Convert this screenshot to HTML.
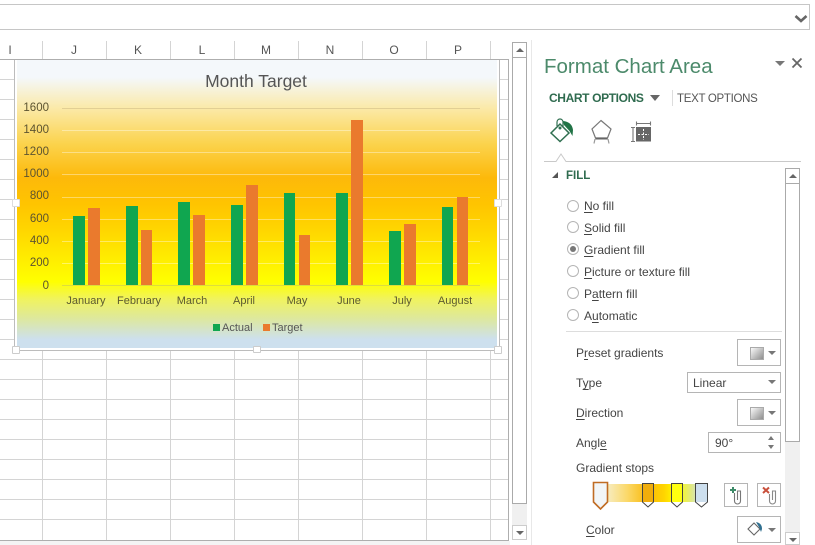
<!DOCTYPE html>
<html><head><meta charset="utf-8">
<style>
html,body{margin:0;padding:0;background:#fff}
#p{position:relative;width:815px;height:545px;overflow:hidden;background:#fff;font-family:"Liberation Sans",sans-serif;color:#444}
#p div,#p span.a{position:absolute}
.t{white-space:nowrap;line-height:16px;font-size:12px}
.h{top:43px;width:20px;text-align:center;font-size:12px;line-height:14px;color:#555}
.yl{left:18px;width:31px;text-align:right;font-size:11.5px;line-height:14px;color:#5c5330}
.xl{top:294px;width:60px;text-align:center;font-size:11px;line-height:14px;color:#5c5a30}
.g{left:62px;width:418px;height:1px;background:rgba(255,255,255,.38)}
.bg{background:#10a650}.bo{background:#ea7a2d}
.r{left:567px;width:10px;height:10px;border:1px solid #b5b5b5;border-radius:50%;background:#fff}
.btn{border:1px solid #b5b5b5;background:#fff;box-sizing:border-box}
.sw{left:12px;top:7px;width:14px;height:13px;background:linear-gradient(135deg,#fafafa,#8e8e8e);border:1px solid #aaa;box-sizing:border-box}
.ar{width:0;height:0;border-left:4px solid transparent;border-right:4px solid transparent;border-top:4px solid #777}
.u{text-decoration:underline;text-underline-offset:2px}
</style></head><body><div id="p">

<!-- formula bar -->
<div style="left:0;top:4px;width:809px;border:1px solid #c6c6c6;border-left:0;box-sizing:content-box;height:24px"></div>
<svg style="position:absolute;left:794px;top:14px" width="14" height="10"><path d="M1.5 2 L7 7 L12.5 2" fill="none" stroke="#666" stroke-width="2.6"/></svg>

<!-- column headers -->
<div class="h" style="left:0">I</div><div class="h" style="left:64px">J</div><div class="h" style="left:128px">K</div><div class="h" style="left:192px">L</div><div class="h" style="left:256px">M</div><div class="h" style="left:320px">N</div><div class="h" style="left:384px">O</div><div class="h" style="left:448px">P</div>

<!-- grid -->
<svg style="position:absolute;left:0;top:0" width="512" height="545">
<g stroke="#d4d4d4" stroke-width="1">
<path d="M0 79.5H14M0 99.5H14M0 119.5H14M0 139.5H14M0 159.5H14M0 179.5H14M0 199.5H14M0 219.5H14M0 239.5H14M0 259.5H14M0 279.5H14M0 299.5H14M0 319.5H14M0 339.5H14"/>
<path d="M499 79.5H508M499 99.5H508M499 119.5H508M499 139.5H508M499 159.5H508M499 179.5H508M499 199.5H508M499 219.5H508M499 239.5H508M499 259.5H508M499 279.5H508M499 299.5H508M499 319.5H508M499 339.5H508"/>
<path d="M0 359.5H508M0 379.5H508M0 399.5H508M0 419.5H508M0 439.5H508M0 459.5H508M0 479.5H508M0 499.5H508M0 519.5H508"/>
<path d="M42.5 350V540M106.5 350V540M170.5 350V540M234.5 350V540M298.5 350V540M362.5 350V540M426.5 350V540M490.5 350V540"/>
<path d="M42.5 41V59M106.5 41V59M170.5 41V59M234.5 41V59M298.5 41V59M362.5 41V59M426.5 41V59M490.5 41V59"/>
</g>
<path d="M0 59.5H508.5V540.5H0" fill="none" stroke="#aeaeae"/>
<path d="M14.5 60V350.5H499.5V60" fill="none" stroke="#bcbcbc"/>
</svg>

<!-- chart -->
<div style="left:17px;top:60px;width:480px;height:288px;background:linear-gradient(180deg,#f4f8fb 0,#f4f8fb 6%,#fbe9a6 17%,#fbd34d 29%,#fdb90a 41%,#ffc400 50%,#ffd800 60%,#ffff00 77%,#f0f35e 83%,#dde8a0 90%,#cde0ee 97%,#cde0ee 100%)"></div>
<div class="t" style="left:156px;top:71px;width:200px;text-align:center;font-size:17.5px;line-height:20px;color:#555">Month Target</div>

<div class="yl" style="top:101px">1600</div><div class="yl" style="top:123px">1400</div><div class="yl" style="top:145px">1200</div><div class="yl" style="top:167px">1000</div><div class="yl" style="top:189px">800</div><div class="yl" style="top:212px">600</div><div class="yl" style="top:234px">400</div><div class="yl" style="top:256px">200</div><div class="yl" style="top:279px">0</div>

<div class="g" style="top:108px;background:rgba(150,130,90,.25)"></div><div class="g" style="top:130px"></div><div class="g" style="top:152px"></div><div class="g" style="top:174px"></div><div class="g" style="top:197px"></div><div class="g" style="top:219px"></div><div class="g" style="top:241px"></div><div class="g" style="top:263px"></div><div class="g" style="top:285px;background:rgba(190,190,100,.5)"></div>

<div class="bg" style="left:73px;top:216px;width:12px;height:69px"></div><div class="bo" style="left:88px;top:208px;width:12px;height:77px"></div>
<div class="bg" style="left:126px;top:206px;width:12px;height:79px"></div><div class="bo" style="left:141px;top:230px;width:11px;height:55px"></div>
<div class="bg" style="left:178px;top:202px;width:12px;height:83px"></div><div class="bo" style="left:193px;top:215px;width:12px;height:70px"></div>
<div class="bg" style="left:231px;top:205px;width:12px;height:80px"></div><div class="bo" style="left:246px;top:185px;width:12px;height:100px"></div>
<div class="bg" style="left:284px;top:193px;width:11px;height:92px"></div><div class="bo" style="left:299px;top:235px;width:11px;height:50px"></div>
<div class="bg" style="left:336px;top:193px;width:12px;height:92px"></div><div class="bo" style="left:351px;top:120px;width:12px;height:165px"></div>
<div class="bg" style="left:389px;top:231px;width:12px;height:54px"></div><div class="bo" style="left:404px;top:224px;width:12px;height:61px"></div>
<div class="bg" style="left:442px;top:207px;width:11px;height:78px"></div><div class="bo" style="left:457px;top:197px;width:11px;height:88px"></div>

<div class="xl" style="left:56px">January</div><div class="xl" style="left:109px">February</div><div class="xl" style="left:162px">March</div><div class="xl" style="left:214px">April</div><div class="xl" style="left:267px">May</div><div class="xl" style="left:319px">June</div><div class="xl" style="left:372px">July</div><div class="xl" style="left:425px">August</div>

<div style="left:213px;top:324px;width:7px;height:7px;background:#10a650"></div>
<div class="t" style="left:222px;top:321px;font-size:11px;line-height:14px;color:#555">Actual</div>
<div style="left:263px;top:324px;width:7px;height:7px;background:#ea7a2d"></div>
<div class="t" style="left:272px;top:321px;font-size:11px;line-height:14px;color:#555">Target</div>

<!-- handles -->
<div style="left:12px;top:346px;width:6px;height:6px;background:#fff;border:1px solid #ccc;border-radius:1px"></div>
<div style="left:253px;top:346px;width:6px;height:5px;background:#fff;border:1px solid #ccc;border-radius:1px"></div>
<div style="left:494px;top:346px;width:6px;height:6px;background:#fff;border:1px solid #ccc;border-radius:1px"></div>
<div style="left:12px;top:199px;width:6px;height:6px;background:#fff;border:1px solid #ddd;border-radius:1px"></div>
<div style="left:494px;top:199px;width:6px;height:6px;background:#fff;border:1px solid #ddd;border-radius:1px"></div>

<!-- sheet scrollbar -->
<div style="left:512px;top:42px;width:15px;height:498px;background:#f0f0f0"></div>
<div class="btn" style="left:512px;top:42px;width:15px;height:16px;border-color:#aaa"><div class="ar" style="left:3px;top:5px;border-top:0;border-bottom:4px solid #666"></div></div>
<div class="btn" style="left:512px;top:57px;width:15px;height:447px;border-color:#aaa"></div>
<div class="btn" style="left:512px;top:525px;width:15px;height:15px;border-color:#ccc"><div class="ar" style="left:3px;top:5px;border-top-color:#666"></div></div>
<div style="left:0;top:541px;width:510px;height:4px;background:#f4f4f4"></div>

<!-- panel -->
<div style="left:531px;top:40px;width:1px;height:505px;background:#e8e8e8"></div>
<div class="t" style="left:544px;top:54px;font-size:20.500px;line-height:26px;color:#4c8a6b">Format Chart Area</div>
<div class="ar" style="left:775px;top:61px;border-left-width:5px;border-right-width:5px;border-top:5px solid #777"></div>
<svg style="position:absolute;left:791px;top:57px" width="12" height="12"><path d="M1.5 1.5L10.5 10.5M10.5 1.5L1.5 10.5" stroke="#666" stroke-width="1.8" fill="none"/></svg>
<div class="t" style="left:549px;top:90px;font-size:12px;font-weight:bold;letter-spacing:-.37px;color:#2f6b4f">CHART OPTIONS</div>
<div class="ar" style="left:650px;top:95px;border-left-width:5px;border-right-width:5px;border-top:6px solid #666"></div>
<div style="left:672px;top:90px;width:1px;height:16px;background:#ddd"></div>
<div class="t" style="left:677px;top:91px;font-size:11.500px;letter-spacing:-.3px;color:#555">TEXT OPTIONS</div>

<!-- tab icons -->
<svg style="position:absolute;left:548px;top:118px" width="110" height="34" fill="none">
<path d="M3 15 L12 6 L21 15 L12 23.500 Z" stroke="#2f6f50" stroke-width="1.500"/>
<path d="M9 8 V4 A3 3 0 0 1 15 4 V9" stroke="#2f6f50" stroke-width="1.200"/>
<circle cx="12" cy="10" r="1.500" fill="#2f6f50"/>
<path d="M15 3 Q24 4 25 12 L24.500 18 L21.500 13 L16 7 Z" fill="#217346"/>
<path d="M53 2.500 L63 11 L59.500 20 L47.500 20 L44 11 Z" stroke="#777" stroke-width="1.200"/>
<path d="M47.500 20.500H59.500" stroke="#666" stroke-width="2"/>
<path d="M47 21L46 25.500M60 21L61 25.500" stroke="#999" stroke-width="1.200"/>
<path d="M83 9.500H87M83 23.500H87M85 9.500V23.500" stroke="#777" stroke-width="1.100"/>
<path d="M88 5.500H103M88.500 3.500V7.500M102.500 3.500V7.500" stroke="#777" stroke-width="1.100"/>
<rect x="88" y="9" width="15" height="14.500" fill="#666"/>
<path d="M95.500 11V22M90 16.500H101" stroke="#fff" stroke-width="1" stroke-dasharray="2 1.500"/>
</svg>
<svg style="position:absolute;left:540px;top:150px" width="265" height="14" fill="none"><path d="M4 11.500H16L21 4L26 11.500H261" stroke="#c9c9c9"/></svg>

<!-- FILL -->
<svg style="position:absolute;left:551px;top:171px" width="9" height="9"><path d="M7 1V7H1Z" fill="#555"/></svg>
<div class="t" style="left:566px;top:168px;font-size:11.500px;font-weight:bold;color:#2f6b4f">FILL</div>

<!-- panel scrollbar -->
<div style="left:785px;top:168px;width:15px;height:377px;background:#f0f0f0"></div>
<div class="btn" style="left:785px;top:168px;width:15px;height:16px;border-color:#aaa"><div class="ar" style="left:3px;top:5px;border-top:0;border-bottom:4px solid #666"></div></div>
<div class="btn" style="left:785px;top:183px;width:15px;height:259px;border-color:#aaa"></div>
<div class="btn" style="left:785px;top:532px;width:15px;height:13px;border-color:#ccc"><div class="ar" style="left:3px;top:5px;border-top-color:#666"></div></div>

<!-- radios -->
<div class="r" style="top:200px"></div><div class="r" style="top:221px"></div><div class="r" style="top:243px"><div style="left:2px;top:2px;width:6px;height:6px;border-radius:50%;background:#777"></div></div><div class="r" style="top:265px"></div><div class="r" style="top:287px"></div><div class="r" style="top:309px"></div>
<div class="t" style="left:584px;top:198px"><span class="u">N</span>o fill</div>
<div class="t" style="left:584px;top:220px"><span class="u">S</span>olid fill</div>
<div class="t" style="left:584px;top:242px"><span class="u">G</span>radient fill</div>
<div class="t" style="left:584px;top:264px"><span class="u">P</span>icture or texture fill</div>
<div class="t" style="left:584px;top:286px">P<span class="u">a</span>ttern fill</div>
<div class="t" style="left:584px;top:308px">A<span class="u">u</span>tomatic</div>
<div style="left:566px;top:331px;width:216px;height:1px;background:#ddd"></div>

<div class="t" style="left:576px;top:345px">P<span class="u">r</span>eset gradients</div>
<div class="btn" style="left:737px;top:339px;width:44px;height:27px"><div class="sw"></div><div class="ar" style="left:30px;top:11px"></div></div>
<div class="t" style="left:576px;top:375px">T<span class="u">y</span>pe</div>
<div class="btn" style="left:687px;top:372px;width:94px;height:21px"><div class="t" style="left:5px;top:2px">Linear</div><div class="ar" style="left:80px;top:7px"></div></div>
<div class="t" style="left:576px;top:405px"><span class="u">D</span>irection</div>
<div class="btn" style="left:737px;top:399px;width:44px;height:27px"><div class="sw"></div><div class="ar" style="left:30px;top:11px"></div></div>
<div class="t" style="left:576px;top:435px">Angl<span class="u">e</span></div>
<div class="btn" style="left:708px;top:432px;width:73px;height:21px"><div class="t" style="left:6px;top:2px">90°</div><div class="ar" style="left:59px;top:3px;border-left-width:3px;border-right-width:3px;border-top:0;border-bottom:4px solid #777"></div><div class="ar" style="left:59px;top:12px;border-left-width:3px;border-right-width:3px"></div></div>
<div class="t" style="left:576px;top:460px">Gradient stops</div>

<!-- gradient stops -->
<div style="left:605px;top:484px;width:103px;height:18px;background:linear-gradient(90deg,#f6eecb 0,#fbd868 22%,#f9b90b 42%,#ffd500 58%,#ffff00 70%,#dfe887 85%,#cde0ee 94%,#fff 100%);border-right:1px solid #999;box-sizing:border-box"></div>
<svg style="position:absolute;left:590px;top:478px" width="125" height="34">
<path d="M3.500 4.500H17.500V24L10.500 31L3.500 24Z" fill="#f2f6f8" stroke="#c06c24" stroke-width="1.600"/>
<path d="M52.500 5.500H63.500V24L58 29L52.500 24Z" fill="#fff" stroke="#444"/>
<rect x="53" y="6" width="10" height="18" fill="#f0ad0c"/>
<path d="M81.500 5.500H92.500V24L87 29L81.500 24Z" fill="#fff" stroke="#444"/>
<rect x="82" y="6" width="10" height="18" fill="#ffff10"/>
<path d="M105.500 5.500H117.500V24L111.500 29L105.500 24Z" fill="#fff" stroke="#444"/>
<rect x="106" y="6" width="11" height="18" fill="#cddfee"/>
</svg>
<div class="btn" style="left:724px;top:483px;width:24px;height:24px"><svg style="position:absolute;left:3px;top:2px" width="18" height="20" fill="none"><path d="M2 4H8M5 1V7" stroke="#3d8a68" stroke-width="2"/><path d="M6.500 7V15A3 3 0 0 0 12.500 15V5H9.500V14" stroke="#777" stroke-width="1.100"/></svg></div>
<div class="btn" style="left:757px;top:483px;width:24px;height:24px"><svg style="position:absolute;left:3px;top:2px" width="18" height="20" fill="none"><path d="M2 1.500L8 7M8 1.500L2 7" stroke="#c9503c" stroke-width="2"/><path d="M8.500 8V15A3 3 0 0 0 14.500 15V5H11.500V14" stroke="#888" stroke-width="1.100"/></svg></div>
<div class="t" style="left:586px;top:522px"><span class="u">C</span>olor</div>
<div class="btn" style="left:737px;top:516px;width:44px;height:27px"><svg style="position:absolute;left:9px;top:3px" width="18" height="17" fill="none"><path d="M1 9L7 3L13 9L7 15Z" stroke="#666" stroke-width="1.100"/><path d="M9 2Q15 3 15 9L14 12L12 7Z" fill="#2f6f8f"/></svg><div class="ar" style="left:30px;top:11px"></div></div>
</div></body></html>
